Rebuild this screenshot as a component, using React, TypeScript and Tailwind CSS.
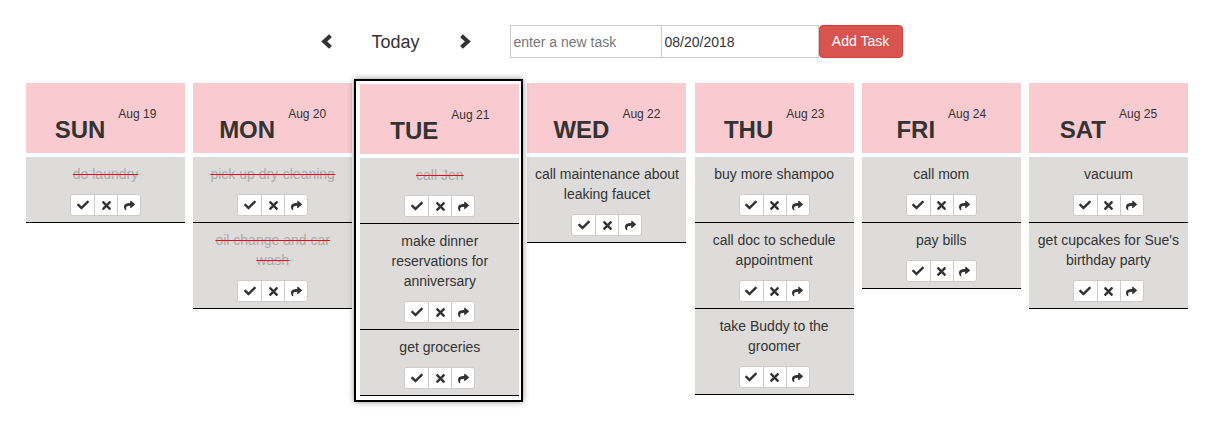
import { FaCheck, FaTimes, FaShare } from "react-icons/fa";

type Task = { text: string; done?: boolean };
type Day = { name: string; date: string; tasks: Task[]; selected?: boolean };

const DAYS: Day[] = [
  { name: "SUN", date: "Aug 19", tasks: [{ text: "do laundry", done: true }] },
  {
    name: "MON",
    date: "Aug 20",
    tasks: [
      { text: "pick up dry-cleaning", done: true },
      { text: "oil change and car wash", done: true },
    ],
  },
  {
    name: "TUE",
    date: "Aug 21",
    selected: true,
    tasks: [
      { text: "call Jen", done: true },
      { text: "make dinner reservations for anniversary" },
      { text: "get groceries" },
    ],
  },
  { name: "WED", date: "Aug 22", tasks: [{ text: "call maintenance about leaking faucet" }] },
  {
    name: "THU",
    date: "Aug 23",
    tasks: [
      { text: "buy more shampoo" },
      { text: "call doc to schedule appointment" },
      { text: "take Buddy to the groomer" },
    ],
  },
  { name: "FRI", date: "Aug 24", tasks: [{ text: "call mom" }, { text: "pay bills" }] },
  {
    name: "SAT",
    date: "Aug 25",
    tasks: [{ text: "vacuum" }, { text: "get cupcakes for Sue's birthday party" }],
  },
];

function Chevron({ dir }: { dir: "left" | "right" }) {
  const pts = dir === "left" ? "9.5,1.8 3.2,7.5 9.5,13.2" : "2.5,1.8 8.8,7.5 2.5,13.2";
  return (
    <svg width="12" height="15" viewBox="0 0 12 15" className="block">
      <polyline points={pts} fill="none" stroke="#333" strokeWidth="4" strokeLinejoin="miter" />
    </svg>
  );
}

function TaskActions() {
  const btn = "flex h-[20px] w-[23px] items-center justify-center bg-white text-[#333]";
  return (
    <div className="mx-auto mt-[10px] flex w-fit overflow-hidden rounded-[3px] border border-[#ccc]">
      <button className={btn}>
        <FaCheck size={12} />
      </button>
      <button className={btn + " border-l border-[#ccc]"}>
        <FaTimes size={13} />
      </button>
      <button className={btn + " border-l border-[#ccc]"}>
        <FaShare size={11} />
      </button>
    </div>
  );
}

function TaskRow({ task }: { task: Task }) {
  return (
    <div className="border-b border-black bg-[#dedcdb] px-[5px] pt-[7px] pb-[6px] text-center">
      <p
        className={
          task.done
            ? "text-[14px] leading-[20px] text-[#aaa] line-through decoration-[#f00]"
            : "text-[14px] leading-[20px] text-[#333]"
        }
      >
        {task.text}
      </p>
      <TaskActions />
    </div>
  );
}

function DayColumn({ day }: { day: Day }) {
  return (
    <div className={day.selected ? "relative mt-px w-[159px] shrink-0" : "relative w-[159px] shrink-0"}>
      {day.selected && (
        <div className="pointer-events-none absolute -top-[5px] -bottom-[6px] -left-[6px] -right-[4px] z-10 border-2 border-black shadow-[0_0_6px_rgba(0,0,0,0.45)]" />
      )}
      <div className="flex h-[70px] items-start justify-center bg-[#f9cbd0] pt-[23px] text-[#333]">
        <span className="mt-[10px] text-[24px] font-bold leading-[28px]">{day.name}</span>
        <span className="ml-[13px] text-[12px] leading-[16px]">{day.date}</span>
      </div>
      <div className="mt-[4px]">
        {day.tasks.map((t) => (
          <TaskRow key={t.text} task={t} />
        ))}
      </div>
    </div>
  );
}

export default function App() {
  return (
    <div className="min-h-[426px] w-full bg-white font-['Liberation_Sans',Arial,sans-serif] text-[#333]">
      <div className="flex items-center justify-center pt-[25px]">
        <button>
          <Chevron dir="left" />
        </button>
        <span className="ml-[38px] text-[18px] leading-[24px]">Today</span>
        <button className="ml-[39px]">
          <Chevron dir="right" />
        </button>
        <input
          className="ml-[39px] h-[33px] w-[152px] border border-[#ccc] px-[3px] text-[14px] text-[#333] outline-none placeholder:text-[#777]"
          placeholder="enter a new task"
        />
        <input
          className="h-[33px] w-[157px] border border-l-0 border-[#ccc] px-[3px] text-[14px] text-[#333] outline-none"
          defaultValue="08/20/2018"
        />
        <button className="h-[33px] w-[84px] rounded-[4px] border border-[#d43f3a] bg-[#d9534f] text-[14px] text-white">
          Add Task
        </button>
      </div>
      <div className="mt-[25px] flex items-start gap-[8.17px] pl-[26px]">
        {DAYS.map((d) => (
          <DayColumn key={d.name} day={d} />
        ))}
      </div>
    </div>
  );
}
